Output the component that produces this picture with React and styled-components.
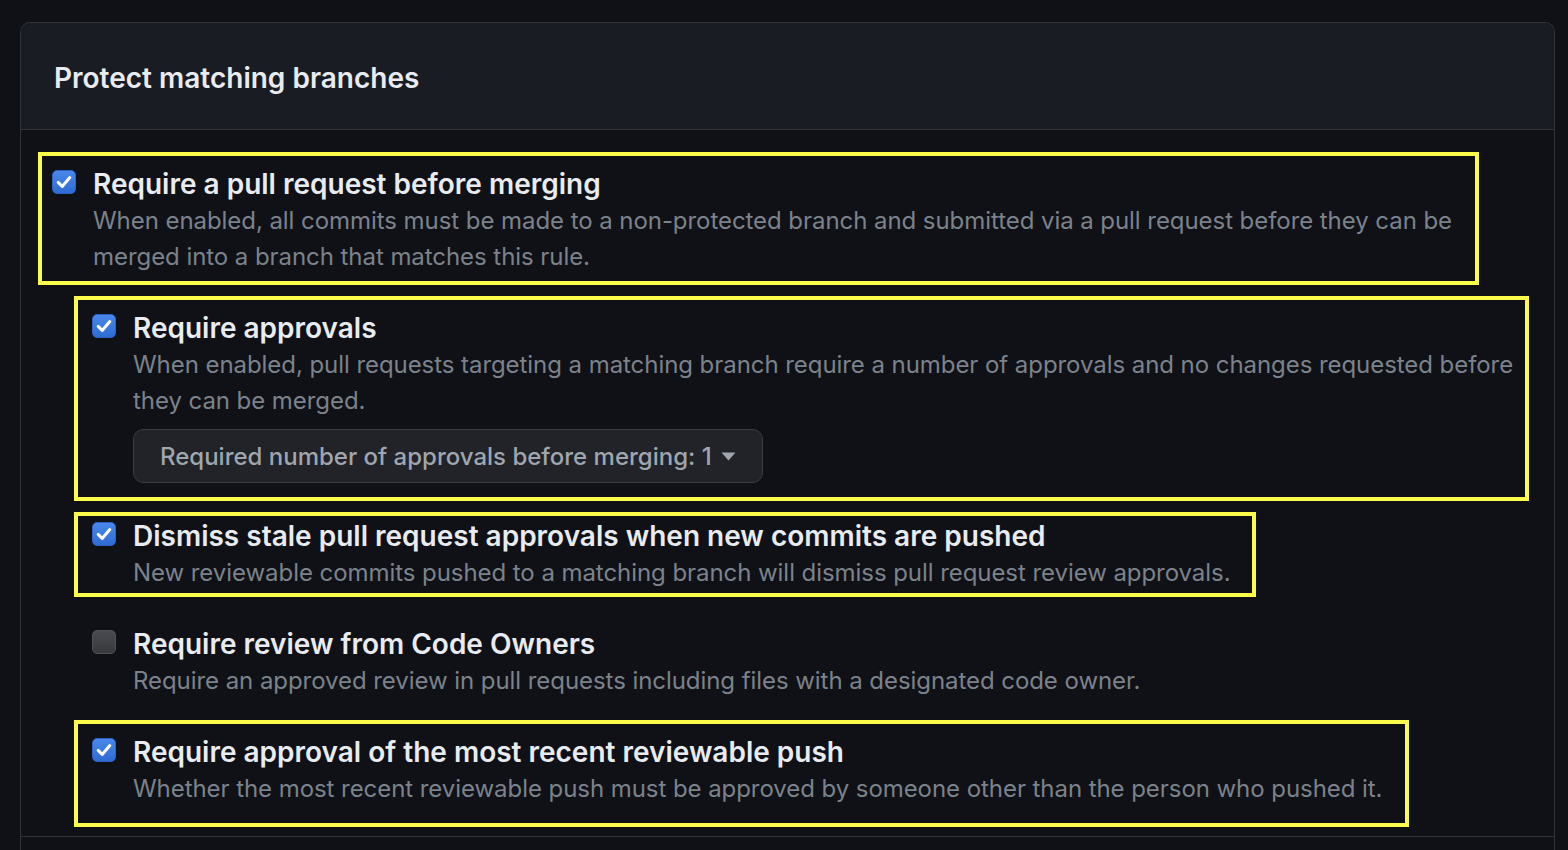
import React from "react";
import styled, { createGlobalStyle } from "styled-components";

const GlobalStyle = createGlobalStyle`
  html, body {
    margin: 0;
    padding: 0;
    background-color: #0f1116;
    font-family: Inter, "Noto Sans", "Liberation Sans", sans-serif;
    overflow: hidden;
  }
`;

const Page = styled.div`
  padding: 22px 13px 0 20px;
  height: 850px;
  box-sizing: border-box;
`;

const Panel = styled.div`
  border: 1px solid #30333a;
  border-bottom: none;
  border-radius: 10px 10px 0 0;
  background-color: #0f1116;
`;

const Header = styled.div`
  display: flex;
  align-items: center;
  height: 107px;
  padding: 3px 0 0 33px;
  box-sizing: border-box;
  background-color: #1a1c23;
  border-radius: 10px 10px 0 0;
  border-bottom: 1px solid #30333a;
`;

const HeaderTitle = styled.h2`
  margin: 0;
  color: #e8ebf0;
  font-size: 28px;
  font-weight: 600;
`;

const Body = styled.div`
  display: flex;
  flex-direction: column;
  gap: 35px;
  padding: 36px 23px 29px 31px;
  border-bottom: 1px solid #30333a;
`;

const Footer = styled.div`
  height: 60px;
`;

const Row = styled.div`
  position: relative;
  display: flex;
  align-items: flex-start;
  gap: 17px;
  width: fit-content;
  margin-left: ${props => (props.$nested ? "40px" : "0px")};
`;

const Highlight = styled.div`
  position: absolute;
  top: ${props => props.$box[0]}px;
  right: ${props => props.$box[1]}px;
  bottom: ${props => props.$box[2]}px;
  left: ${props => props.$box[3]}px;
  border: 4px solid #fdfb4c;
  pointer-events: none;
`;

const Box = styled.div`
  flex: none;
  width: 24px;
  height: 24px;
  margin-top: 4px;
  border-radius: 5px;
  box-sizing: border-box;
  display: flex;
  align-items: center;
  justify-content: center;
  background: ${props => (props.$checked
    ? "linear-gradient(180deg, #4b88ea 0%, #2f6bd4 100%)"
    : "linear-gradient(180deg, #4a4b50 0%, #38393d 100%)")};
  border: 1px solid ${props => (props.$checked ? "#2b62c4" : "#505157")};
`;

const Content = styled.div`
  display: flex;
  flex-direction: column;
`;

const Title = styled.div`
  color: #e8ebf0;
  font-size: 28px;
  font-weight: 600;
  line-height: 36px;
`;

const Description = styled.div`
  color: #7c828b;
  font-size: 24px;
  letter-spacing: -0.06px;
  line-height: 36px;
  margin-top: 1px;
`;

const SelectButton = styled.button`
  display: flex;
  align-items: center;
  gap: 9px;
  width: fit-content;
  height: 54px;
  margin-top: 10px;
  padding: 0 26px;
  background-color: #212329;
  border: 1px solid #3a3d44;
  border-radius: 10px;
  color: #a0a6ae;
  font-family: inherit;
  font-size: 24px;
  font-weight: 500;
  cursor: pointer;
`;

const Caret = () => (
  <svg width="15" height="9" viewBox="0 0 15 9">
    <path d="M0.5 0.5 H14.5 L7.5 8.5 Z" fill="#a0a6ae" />
  </svg>
);

const Check = () => (
  <svg width="20" height="20" viewBox="0 0 20 20">
    <path d="M4.2 10.4 L8.2 14.4 L15.8 5.6" fill="none" stroke="#ffffff" strokeWidth="3" strokeLinecap="round" strokeLinejoin="round" />
  </svg>
);

const rules = [
  {
    title: "Require a pull request before merging",
    text: "When enabled, all commits must be made to a non-protected branch and submitted via a pull request before they can be merged into a branch that matches this rule.",
    checked: true,
    box: [-14, 52, -10, -14],
  },
  {
    title: "Require approvals",
    text: "When enabled, pull requests targeting a matching branch require a number of approvals and no changes requested before they can be merged.",
    checked: true,
    nested: true,
    select: "Required number of approvals before merging: 1",
    box: [-14, 2, -18, -18],
  },
  {
    title: "Dismiss stale pull request approvals when new commits are pushed",
    text: "New reviewable commits pushed to a matching branch will dismiss pull request review approvals.",
    checked: true,
    nested: true,
    box: [-6, -25, -6, -18],
  },
  {
    title: "Require review from Code Owners",
    text: "Require an approved review in pull requests including files with a designated code owner.",
    checked: false,
    nested: true,
  },
  {
    title: "Require approval of the most recent reviewable push",
    text: "Whether the most recent reviewable push must be approved by someone other than the person who pushed it.",
    checked: true,
    nested: true,
    box: [-14, -27, -20, -18],
  },
];

function App() {
  return (
    <>
      <GlobalStyle />
      <Page>
        <Panel>
          <Header>
            <HeaderTitle>Protect matching branches</HeaderTitle>
          </Header>
          <Body>
            {rules.map(rule => (
              <Row key={rule.title} $nested={rule.nested}>
                <Box $checked={rule.checked}>{rule.checked && <Check />}</Box>
                <Content>
                  <Title>{rule.title}</Title>
                  <Description>{rule.text}</Description>
                  {rule.select && (
                    <SelectButton>
                      {rule.select}
                      <Caret />
                    </SelectButton>
                  )}
                </Content>
                {rule.box && <Highlight $box={rule.box} />}
              </Row>
            ))}
          </Body>
          <Footer />
        </Panel>
      </Page>
    </>
  );
}

export default App;
